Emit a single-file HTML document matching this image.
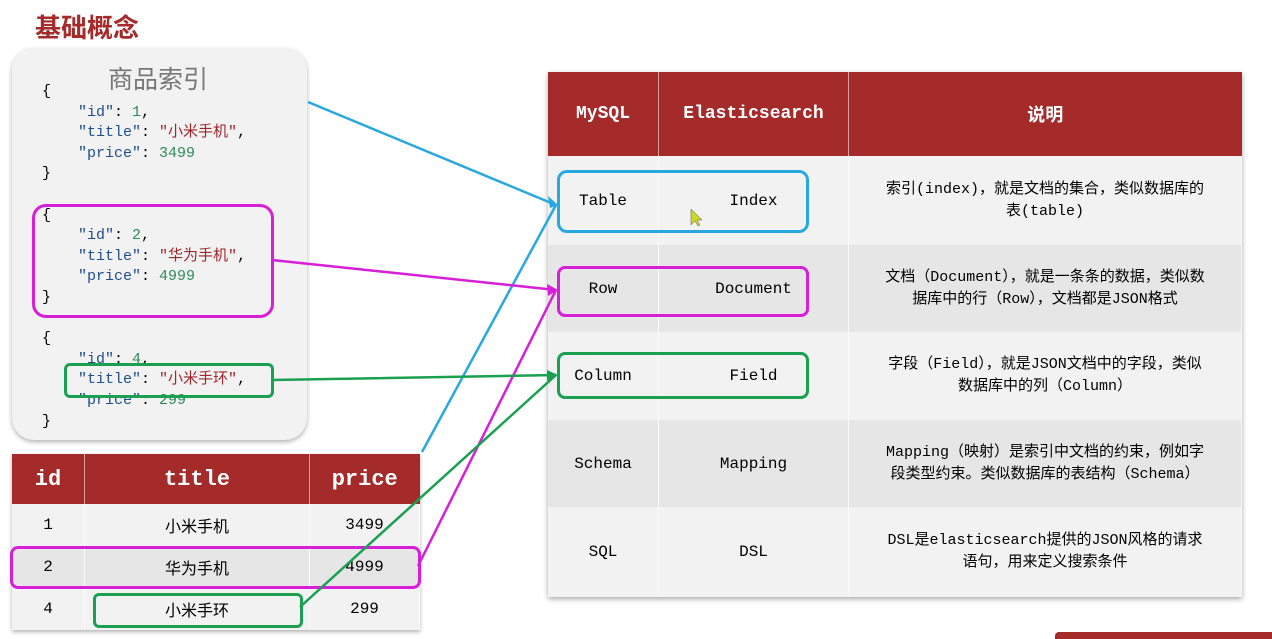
<!DOCTYPE html>
<html><head><meta charset="utf-8"><style>
body{margin:0;width:1272px;height:639px;background:#fff;position:relative;overflow:hidden;font-family:"Liberation Sans","Noto Sans CJK SC",sans-serif}
.a{position:absolute}
.mono{font-family:"Liberation Mono","Noto Sans CJK SC",monospace;font-size:15px;line-height:20.6px;white-space:pre}
.k{color:#1f4e8c}.s{color:#a0262a}.n{color:#2e8b57}
table{border-collapse:collapse;position:absolute;font-family:"Liberation Mono","Noto Sans CJK SC",monospace}
td,th{text-align:center;padding:0;vertical-align:middle}
th{background:#a52a2a;color:#fff;border-right:1px solid #d9a0a0}
td{border-right:1px solid #fafafa}
</style></head><body>
<div class="a" style="left:35px;top:8px;font-size:26px;font-weight:bold;color:#a52a2a;font-family:'Noto Sans CJK SC',sans-serif">基础概念</div>
<div class="a" style="left:12px;top:48px;width:295px;height:392px;background:#f2f2f2;border-radius:22px;box-shadow:0 2px 5px rgba(0,0,0,.3)"></div>
<div class="a" style="left:108px;top:60px;font-size:25px;color:#777;font-family:'Noto Sans CJK SC',sans-serif">商品索引</div>
<div class="a mono" style="left:42px;top:82px;color:#000">{
    <span class="k">"id"</span>: <span class="n">1</span>,
    <span class="k">"title"</span>: <span class="s">"小米手机"</span>,
    <span class="k">"price"</span>: <span class="n">3499</span>
}

{
    <span class="k">"id"</span>: <span class="n">2</span>,
    <span class="k">"title"</span>: <span class="s">"华为手机"</span>,
    <span class="k">"price"</span>: <span class="n">4999</span>
}

{
    <span class="k">"id"</span>: <span class="n">4</span>,
    <span class="k">"title"</span>: <span class="s">"小米手环"</span>,
    <span class="k">"price"</span>: <span class="n">299</span>
}</div>
<div class="a" style="left:32px;top:204px;width:236px;height:108px;border:3px solid #d81fd8;border-radius:14px"></div>
<div class="a" style="left:64px;top:363px;width:204px;height:29px;border:3px solid #1aa050;border-radius:6px"></div>

<table style="left:12px;top:454px;width:408px;font-size:16px;box-shadow:0 2px 4px rgba(0,0,0,.3)">
<tr style="height:50px;font-size:22px"><th style="width:72px">id</th><th style="width:224px">title</th><th style="border:0">price</th></tr>
<tr style="height:42px;background:#f2f2f2"><td>1</td><td>小米手机</td><td>3499</td></tr>
<tr style="height:42px;background:#e6e6e6"><td>2</td><td>华为手机</td><td>4999</td></tr>
<tr style="height:42px;background:#f2f2f2"><td>4</td><td>小米手环</td><td>299</td></tr>
</table>
<div class="a" style="left:10px;top:546px;width:405px;height:37px;border:3px solid #d81fd8;border-radius:8px"></div>
<div class="a" style="left:93px;top:593px;width:204px;height:29px;border:3px solid #1aa050;border-radius:6px"></div>

<table style="left:548px;top:72px;width:694px;font-size:16px;box-shadow:0 2px 5px rgba(0,0,0,.35)">
<tr style="height:84px;font-size:18px"><th style="width:110px">MySQL</th><th style="width:189px">Elasticsearch</th><th style="border:0">说明</th></tr>
<tr style="height:89px;background:#f2f2f2"><td>Table</td><td>Index</td><td style="font-size:15px;line-height:22px">索引(index)，就是文档的集合，类似数据库的<br>表(table)</td></tr>
<tr style="height:87px;background:#e6e6e6"><td>Row</td><td>Document</td><td style="font-size:15px;line-height:22px">文档（Document），就是一条条的数据，类似数<br>据库中的行（Row），文档都是JSON格式</td></tr>
<tr style="height:88px;background:#f2f2f2"><td>Column</td><td>Field</td><td style="font-size:15px;line-height:22px">字段（Field），就是JSON文档中的字段，类似<br>数据库中的列（Column）</td></tr>
<tr style="height:87px;background:#e6e6e6"><td>Schema</td><td>Mapping</td><td style="font-size:15px;line-height:22px">Mapping（映射）是索引中文档的约束，例如字<br>段类型约束。类似数据库的表结构（Schema）</td></tr>
<tr style="height:90px;background:#f2f2f2"><td>SQL</td><td>DSL</td><td style="font-size:15px;line-height:22px">DSL是elasticsearch提供的JSON风格的请求<br>语句，用来定义搜索条件</td></tr>
</table>
<div class="a" style="left:557px;top:170px;width:246px;height:57px;border:3px solid #29a8e0;border-radius:10px"></div>
<div class="a" style="left:557px;top:266px;width:246px;height:45px;border:3px solid #d81fd8;border-radius:8px"></div>
<div class="a" style="left:557px;top:352px;width:246px;height:41px;border:3px solid #1aa050;border-radius:8px"></div>

<svg class="a" style="left:0;top:0" width="1272" height="639">
<g fill="none" stroke-width="2.5">
<path d="M308 102 L556 205 M422 452 L556 205" stroke="#29a8e0"/>
<path d="M272 260 L556 290 M418 566 L556 290" stroke="#d81fd8"/>
<path d="M272 380 L556 375 M300 607 L556 375" stroke="#1aa050"/>
</g>
<path d="M558 205 l-10 -9 l2 12z" fill="#29a8e0"/>
<path d="M558 290 l-11 -6 l1 12z" fill="#d81fd8"/>
<path d="M558 375 l-11 -5 l0 11z" fill="#1aa050"/>
<path d="M691 209 l0 16 l4 -4 l3 5 l2 -1 l-3 -5 l5 0z" fill="#cdd626" stroke="#555" stroke-width=".5"/>
</svg>
<div class="a" style="left:1055px;top:632px;width:217px;height:7px;background:#a52a2a;border-radius:4px 0 0 0"></div>
</body></html>
